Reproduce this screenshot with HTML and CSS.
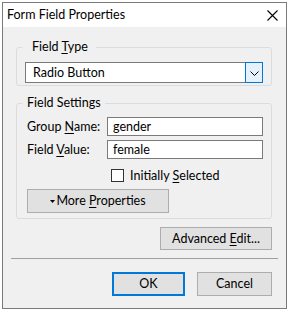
FILE: index.html
```html
<!DOCTYPE html>
<html>
<head>
<meta charset="utf-8">
<link rel="stylesheet" href="styles.css">
</head>
<body>
<div class="window">
  <div class="titlebar">
    <span class="title">Form Field Properties</span>
    <svg class="close" width="11" height="11" viewBox="0 0 11 11"><path d="M0.5 0.5 L10.5 10.5 M10.5 0.5 L0.5 10.5" stroke="#000" stroke-width="1.1" fill="none"/></svg>
  </div>
  <div class="content">
    <fieldset class="group group-type">
      <legend class="legend-type">Field <u>T</u>ype</legend>
      <div class="select">
        <span class="select-text">Radio Button</span>
        <span class="select-btn"><svg width="9" height="5" viewBox="0 0 9 5"><path d="M0.5 0.5 L4.5 4.5 L8.5 0.5" stroke="#000" stroke-width="1" fill="none"/></svg></span>
      </div>
    </fieldset>
    <fieldset class="group group-settings">
      <legend class="legend-settings">Field Settings</legend>
      <div class="row">
        <span class="label">Group <u>N</u>ame:</span>
        <span class="input">gender</span>
      </div>
      <div class="row row2">
        <span class="label">Field <u>V</u>alue:</span>
        <span class="input">female</span>
      </div>
      <div class="check-row">
        <span class="checkbox"></span>
        <span class="check-label">Initially <u>S</u>elected</span>
      </div>
      <div class="btn more"><svg class="tri" width="5" height="3" viewBox="0 0 5 3"><path d="M0 0 L5 0 L2.5 3 Z" fill="#000"/></svg><span>More <u>P</u>roperties</span></div>
    </fieldset>
    <div class="adv-row">
      <div class="btn adv"><span>Advanced <u>E</u>dit...</span></div>
    </div>
  </div>
  <div class="separator"></div>
  <div class="footer">
    <div class="btn ok">OK</div>
    <div class="btn cancel">Cancel</div>
  </div>
</div>
</body>
</html>
```

FILE: styles.css
```css
* { box-sizing: border-box; }
html, body { margin: 0; padding: 0; background: #ffffff; }
body {
  font-family: Lato, "Noto Sans", sans-serif;
  font-size: 12.5px;
  color: #000;
}
u { text-decoration-thickness: 1px; text-underline-offset: 2px; }
.window {
  margin: 2px 0 0 2px;
  width: 285px;
  height: 307px;
  border: 1px solid #7a7a7a;
  background: #f0f0f0;
  display: flex;
  flex-direction: column;
}
.titlebar {
  height: 24px;
  background: #fff;
  display: flex;
  align-items: center;
  justify-content: space-between;
  padding: 0 8px 0 4px;
  flex: none;
}
.title { line-height: 16px; }
.close { display: block; margin-top: 1px; }
.content {
  padding: 0 14px 0 13px;
  display: flex;
  flex-direction: column;
}
.group {
  margin: 0;
  border: 1px solid #dcdcdc;
  border-radius: 3px;
  min-width: 0;
}
.group legend { line-height: 16px; height: 16px; }
.group-type {
  margin-top: 12px;
  padding: 7px 8px 2px 8px;
}
.legend-type { margin-left: -3px; padding: 0 8px 0 10px; }
.legend-settings { margin-left: -5px; padding: 0 4px 0 5px; }
.select {
  height: 21px;
  background: #fff;
  border: 1px solid #7a7a7a;
  display: flex;
  align-items: stretch;
}
.select-text { flex: 1; padding-left: 7px; line-height: 19px; }
.select-btn {
  width: 18px;
  margin: -1px -1px -1px 0;
  border: 1px solid #0078d7;
  background: #e5f1fb;
  display: flex;
  align-items: center;
  justify-content: center;
}
.select-btn svg { display: block; margin-top: 1px; }
.group-settings {
  margin-top: 9px;
  padding: 6px 8px 5px 10px;
}
.row { display: flex; align-items: center; height: 19px; }
.row2 { margin-top: 4px; }
.label { width: 80px; flex: none; }
.input {
  flex: 1;
  height: 19px;
  background: #fff;
  border: 1px solid #7a7a7a;
  padding-left: 5px;
  line-height: 17px;
}
.check-row {
  display: flex;
  align-items: center;
  margin-top: 10px;
  margin-left: 84px;
  height: 13px;
}
.checkbox {
  width: 13px;
  height: 13px;
  border: 1px solid #333;
  background: #fff;
  flex: none;
}
.check-label { margin-left: 6px; line-height: 16px; }
.btn {
  background: #e1e1e1;
  border: 1px solid #adadad;
  display: flex;
  align-items: center;
  justify-content: center;
  line-height: 16px;
}
.more {
  margin-top: 7px;
  width: 142px;
  height: 24px;
}
.tri { display: block; margin-right: 1px; margin-top: 1px; }
.adv-row { display: flex; justify-content: flex-end; margin-top: 8px; }
.adv { width: 112px; height: 23px; }
.separator {
  margin: 8px 8px 0 8px;
  height: 1px;
  background: #a0a0a0;
  flex: none;
}
.footer {
  display: flex;
  justify-content: flex-end;
  gap: 12px;
  padding-right: 14px;
  margin-top: 13px;
}
.ok { width: 73px; height: 24px; border: 2px solid #0078d7; }
.cancel { width: 75px; height: 24px; }
```
